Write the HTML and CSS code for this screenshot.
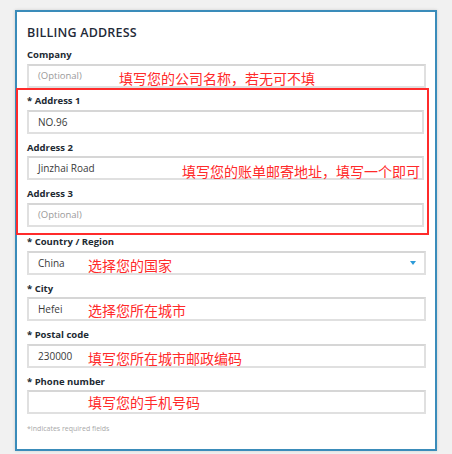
FILE: index.html
```html
<!DOCTYPE html>
<html lang="zh">
<head>
<meta charset="utf-8">
<title>Billing Address</title>
<link rel="stylesheet" href="styles.css">
</head>
<body>
<div class="card">
  <h2 class="title">BILLING ADDRESS</h2>

  <div class="field field-tight">
    <div class="label">Company</div>
    <div class="input"><span class="ph">(Optional)</span><span class="note note-company">填写您的公司名称，若无可不填</span></div>
  </div>

  <div class="highlight">
    <div class="field">
      <div class="label">* Address 1</div>
      <div class="input"><span class="val">NO.96</span></div>
    </div>
    <div class="field">
      <div class="label">Address 2</div>
      <div class="input"><span class="val">Jinzhai Road</span><span class="note note-addr">填写您的账单邮寄地址，填写一个即可</span></div>
    </div>
    <div class="field field-last">
      <div class="label">Address 3</div>
      <div class="input"><span class="ph">(Optional)</span></div>
    </div>
  </div>

  <div class="field">
    <div class="label">* Country / Region</div>
    <div class="input"><span class="val">China</span><span class="note note-std">选择您的国家</span><span class="arrow"></span></div>
  </div>
  <div class="field">
    <div class="label">* City</div>
    <div class="input"><span class="val">Hefei</span><span class="note note-std note-up">选择您所在城市</span></div>
  </div>
  <div class="field">
    <div class="label">* Postal code</div>
    <div class="input"><span class="val">230000</span><span class="note note-std">填写您所在城市邮政编码</span></div>
  </div>
  <div class="field">
    <div class="label">* Phone number</div>
    <div class="input"><span class="note note-std note-up2">填写您的手机号码</span></div>
  </div>

  <p class="footnote">*Indicates required fields</p>
</div>
</body>
</html>
```

FILE: styles.css
```css
html, body {
  margin: 0;
  padding: 0;
}
body {
  background: #f1f1f1;
  font-family: "Open Sans", "Liberation Sans", "Noto Sans CJK SC", sans-serif;
  width: 452px;
  height: 454px;
  overflow: hidden;
}
.card {
  box-sizing: border-box;
  margin: 10px 0 0 15px;
  width: 422px;
  background: #fff;
  border: 2px solid #3a8cba;
  box-shadow: 0 0 3px rgba(0, 0, 0, 0.15);
  padding: 13px 9px 15px 10px;
}
.title {
  margin: 0 0 8px 0;
  font-size: 12.5px;
  line-height: 16px;
  font-weight: 600;
  letter-spacing: 0.2px;
  color: #1f2a38;
}
.field {
  margin-bottom: 8px;
}
.field-tight {
  margin-bottom: 0.5px;
}
.field-last {
  margin-bottom: 0;
}
.label {
  font-size: 9.5px;
  line-height: 12px;
  font-weight: 700;
  color: #222a33;
  margin-bottom: 2.5px;
}
.input {
  position: relative;
  box-sizing: border-box;
  height: 24px;
  border: 2px solid #e0e0e0;
  border-top-color: #d6d6d6;
  background: #fff;
  display: flex;
  align-items: center;
  padding-left: 9px;
}
.val {
  font-size: 10px;
  color: #3a3a3a;
}
.ph {
  font-size: 9.5px;
  color: #9a9a9a;
}
.arrow {
  margin-left: auto;
  margin-right: 8px;
  width: 0;
  height: 0;
  border-left: 3px solid transparent;
  border-right: 3px solid transparent;
  border-top: 4px solid #2d9bd8;
}
.highlight {
  margin: 0 -3px 1px -11px;
  border: 2px solid #ff2b2b;
  padding: 5px 3px 6.5px 9px;
}
.note {
  position: absolute;
  top: 2px;
  font-family: "Noto Sans CJK SC", sans-serif;
  font-size: 14px;
  line-height: 20px;
  color: #ff2a2a;
  white-space: nowrap;
}
.note-company {
  left: 90px;
}
.note-addr {
  left: 153px;
  top: 3px;
}
.note-std {
  left: 59px;
}
.note-up {
  top: 1px;
}
.note-up2 {
  top: 0;
}
.footnote {
  margin: 10px 0 0 0;
  font-size: 7px;
  line-height: 10px;
  color: #a8a8a8;
}
```
